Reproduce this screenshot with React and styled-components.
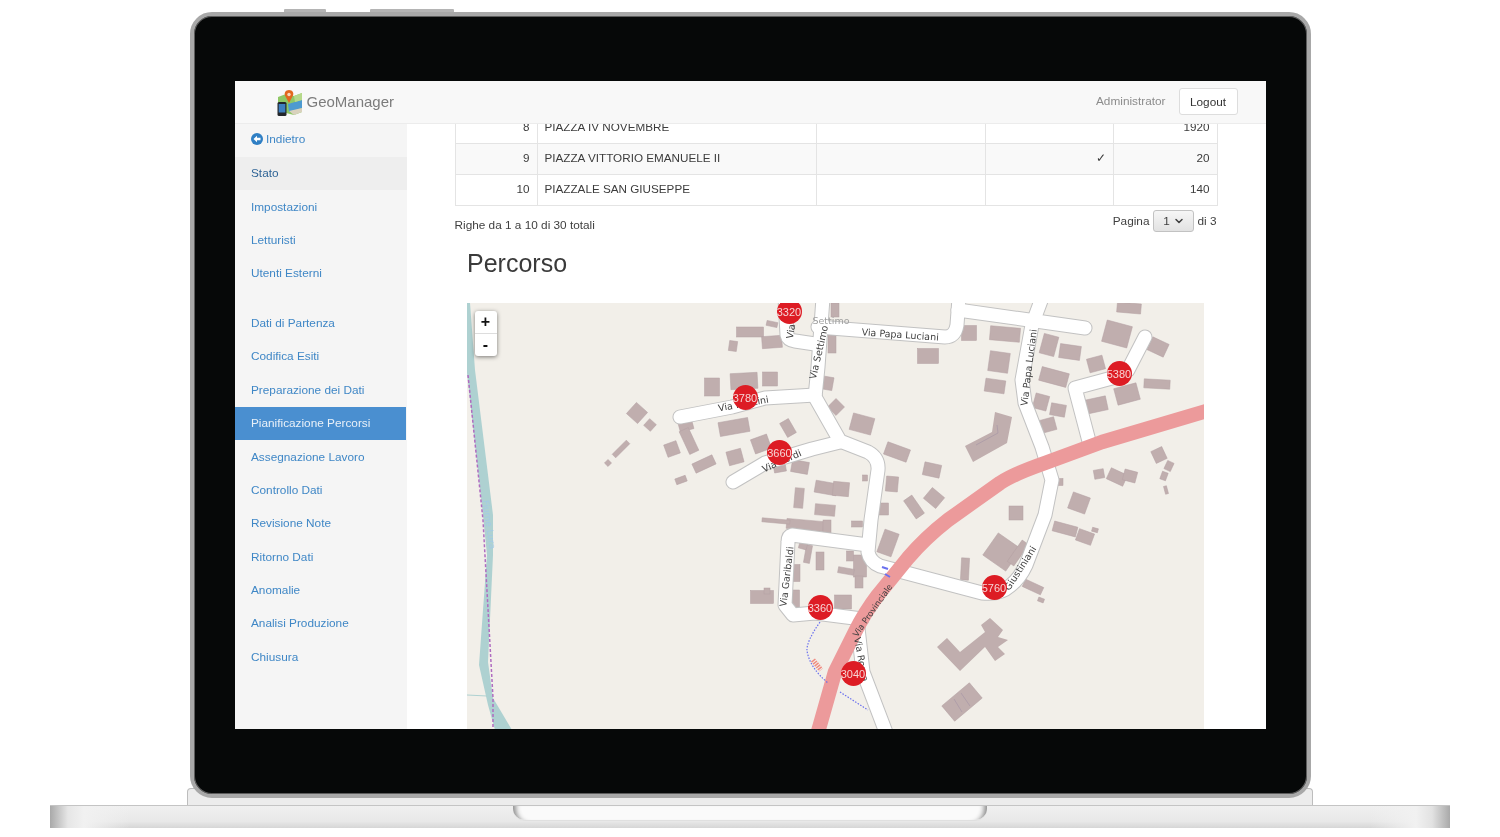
import React from 'react';
import styled, { createGlobalStyle } from 'styled-components';
import { ChevronDown } from 'lucide-react';

const GlobalStyle = createGlobalStyle`
html, body {
  margin: 0;
  padding: 0;
  background: #fff;
}
body {
  font-family: "Liberation Sans", Arial, sans-serif;
  font-size: 11.8px;
  color: #3f3f3f;
}
`;

const Page = styled.div`
width: 1500px;
height: 837px;
padding-top: 9px;
box-sizing: border-box;
overflow: hidden;
`;

const Laptop = styled.div`
display: flex;
flex-direction: column;
align-items: center;
`;

const LidButtons = styled.div`
display: flex;
gap: 44px;
width: 1121px;
height: 3px;
padding-left: 94px;
box-sizing: border-box;
`;

const LidButton = styled.div`
width: ${p => p.$w}px;
background: #b4b4b4;
border-radius: 1px 1px 0 0;
`;

const Lid = styled.div`
position: relative;
z-index: 1;
width: 1121px;
height: 786px;
box-sizing: border-box;
padding: 65px 41px;
background: #060808;
border: 4px solid #a8a8a8;
border-radius: 22px;
box-shadow: inset 0 0 0 1px #5c5c5c;
`;

const Hinge = styled.div`
width: 1126px;
height: 17px;
margin-top: -10px;
box-sizing: border-box;
background: #ececec;
border: 1px solid #bdbdbd;
border-bottom: none;
border-radius: 4px 4px 0 0;
`;

const Base = styled.div`
position: relative;
width: 1400px;
height: 23px;
box-sizing: border-box;
border-top: 1px solid #c4c4c4;
background:
  linear-gradient(90deg, #a9a9a9 0, #e6e6e6 18px, #f1f1f1 34px, rgba(240,240,240,0) 80px, rgba(240,240,240,0) 1320px, #f1f1f1 1366px, #e2e2e2 1382px, #a9a9a9 1400px),
  linear-gradient(180deg, #f0f0f0 0, #e8e8e8 70%, #d6d6d6 100%);
`;

const Notch = styled.div`
position: absolute;
top: 0;
left: 463px;
width: 474px;
height: 15px;
box-sizing: border-box;
background: #fafafa;
border-bottom: 1px solid #e0e0e0;
border-radius: 0 0 12px 12px;
box-shadow: inset 8px 0 5px -5px #8e8e8e, inset -8px 0 5px -5px #8e8e8e;
`;

const Screen = styled.div`
width: 1031px;
height: 648px;
display: flex;
flex-direction: column;
background: #fff;
overflow: hidden;
filter: blur(0.35px);
`;

const Navbar = styled.header`
display: flex;
align-items: center;
flex: 0 0 43px;
box-sizing: border-box;
padding: 0 28px 2px 42px;
background: #f8f8f8;
border-bottom: 1px solid #ececec;
`;

const Brand = styled.div`
display: flex;
align-items: center;
gap: 4px;
flex: 1;
font-size: 15px;
color: #7c7c7c;
svg {
  margin-top: 3px;
}
`;

const UserName = styled.span`
margin-right: 13px;
color: #8c8c8c;
`;

const LogoutButton = styled.button`
width: 59px;
height: 27px;
margin-top: 1px;
padding: 0;
background: #fff;
border: 1px solid #ddd;
border-radius: 3px;
font: inherit;
color: #333;
`;

const Body = styled.div`
display: flex;
flex: 1;
min-height: 0;
`;

const Sidebar = styled.nav`
flex: 0 0 172px;
display: flex;
flex-direction: column;
background: #f5f5f5;
`;

const NavItem = styled.a`
display: flex;
align-items: center;
gap: 3px;
flex: 0 0 ${p => (p.$back ? 33 : 33.4)}px;
box-sizing: border-box;
margin-top: ${p => (p.$groupStart ? 16.2 : 0)}px;
margin-right: ${p => (p.$active ? 1 : 0)}px;
padding: 0 0 ${p => (p.$back ? 3 : 1)}px 16.5px;
background: ${p => (p.$active ? '#4a8fd0' : p.$current ? '#eeeeee' : 'transparent')};
color: ${p => (p.$active ? '#e8f0f8' : p.$current ? '#2f6496' : '#3f87c6')};
`;

const Content = styled.main`
flex: 1;
min-width: 0;
padding: 0 49px 0 48px;
overflow: hidden;
`;

const Table = styled.table`
width: 762px;
margin-top: -12px;
table-layout: fixed;
border-collapse: collapse;
font-size: 11.7px;
`;

const Row = styled.tr`
height: 31px;
background: ${p => (p.$striped ? '#f9f9f9' : '#fff')};
`;

const Cell = styled.td`
padding: 0 7px 3px;
border: 1px solid #e4e4e4;
text-align: ${p => (p.$right ? 'right' : 'left')};
color: #3c3c3c;
`;

const Pager = styled.div`
display: flex;
justify-content: space-between;
align-items: flex-start;
height: 26px;
`;

const RowCount = styled.span`
padding-top: 11.5px;
line-height: 14px;
`;

const PageControl = styled.div`
display: flex;
align-items: center;
gap: 4px;
padding-top: 4px;
height: 22px;
line-height: 20px;
`;

const PageSelect = styled.div`
display: flex;
align-items: center;
justify-content: center;
gap: 3px;
width: 41px;
height: 22px;
margin-right: -1px;
box-sizing: border-box;
background: linear-gradient(180deg, #f6f6f6, #e2e2e2);
border: 1px solid #c2c2c2;
border-radius: 3px;
`;

const Title = styled.h2`
margin: 18px 0 27px 12.5px;
font-size: 25px;
font-weight: 400;
line-height: 26px;
color: #3a3a3a;
`;

const MapFrame = styled.div`
position: relative;
width: 737px;
height: 426px;
margin-left: 12px;
overflow: hidden;
background: #f2efe9;
`;

const MapDrawing = styled.svg`
display: block;
width: 737px;
height: 426px;
font-family: "DejaVu Sans", sans-serif;
`;

const ZoomControl = styled.div`
position: absolute;
top: 8px;
left: 8px;
width: 22px;
background: #fff;
border-radius: 3px;
box-shadow: 0 1px 4px rgba(0, 0, 0, 0.5);
`;

const ZoomButton = styled.div`
height: 22px;
display: flex;
align-items: center;
justify-content: center;
font-size: 16px;
font-weight: 700;
color: #111;
& + & {
  border-top: 1px solid #ddd;
}
`;

const Pin = styled.div.attrs(p => ({
  style: { left: p.$x - 467 - 12, top: p.$y - 303 - 12 },
}))`
position: absolute;
width: 25px;
height: 25px;
display: flex;
align-items: center;
justify-content: center;
border-radius: 50%;
background: #dd1c24;
color: #f6d5d5;
font-size: 11px;
`;

const sideItems = [
  { label: 'Stato', current: true },
  { label: 'Impostazioni' },
  { label: 'Letturisti' },
  { label: 'Utenti Esterni' },
  { label: 'Dati di Partenza', groupStart: true },
  { label: 'Codifica Esiti' },
  { label: 'Preparazione dei Dati' },
  { label: 'Pianificazione Percorsi', active: true },
  { label: 'Assegnazione Lavoro' },
  { label: 'Controllo Dati' },
  { label: 'Revisione Note' },
  { label: 'Ritorno Dati' },
  { label: 'Anomalie' },
  { label: 'Analisi Produzione' },
  { label: 'Chiusura' },
];

const rows = [
  { n: 8, name: 'PIAZZA IV NOVEMBRE', check: '', total: 1920 },
  { n: 9, name: 'PIAZZA VITTORIO EMANUELE II', check: '✓', total: 20, striped: true },
  { n: 10, name: 'PIAZZALE SAN GIUSEPPE', check: '', total: 140 },
];

const pins = [
  [789, 311, 3320], [745, 397, 3780], [779.5, 452, 3660], [1119, 373, 5380],
  [994, 587, 5760], [820, 607, 3360], [853, 673, 3040],
];

const roads = [
  'M823 298 L818 367 L815 397 L840 441 L868 452 Q879 458 878 470 L871 520 L868 552 Q870 562 880 566 L982 593 Q1000 595 1010 586 Q1020 578 1026 565 L1045 515 L1052 480 L1042 447 L1025 403 L1022 380 L1032 325 L1042 298',
  'M785 298 L787 335 Q788 340 795 341 L815 344',
  'M818 327 L945 337 Q955 337 957 325 L959 298',
  'M958 310 L1085 328',
  'M680 417 L732 407 L765 398 L815 395',
  'M733 482 L765 463 L812 449 L840 442',
  'M1145 337 L1128 370 L1112 378 L1075 388 L1090 445',
  'M868 545 L792 535 Q788 536 788 542 L785 605 L793 615 L815 613 L862 619',
  'M858 628 L863 672 L887 735',
];

// x, y (centre), w, h, angle
const buildings = [
  [750, 332, 27, 10, 0], [772, 324, 11, 5, 12], [733, 346, 8, 10, 8], [772, 342, 20, 12, -4],
  [712, 387, 15, 18, 0], [744, 381, 27, 16, -3], [770, 379, 15, 14, 0],
  [637, 413, 15, 15, 42], [650, 425, 9, 9, 42], [621, 449, 20, 5, -45], [608, 463, 5, 5, 45],
  [686, 426, 14, 9, -15], [689, 441, 10, 25, -25], [672, 449, 13, 13, -20],
  [734, 427, 30, 14, -10], [788, 428, 10, 16, -30], [761, 444, 17, 15, -20], [735, 457, 15, 14, -15],
  [704, 464, 22, 10, -25], [681, 480, 11, 6, -20], [780, 469, 12, 6, -10], [800, 467, 17, 12, 10],
  [799, 498, 9, 20, 5], [826, 488, 22, 12, 10], [825, 510, 20, 11, 5], [826, 383, 14, 13, 10],
  [832, 344, 8, 18, 0], [836, 407, 12, 12, 45], [835, 310, 8, 14, 0], [969, 333, 15, 15, 0],
  [1005, 334, 30, 14, 5], [928, 356, 21, 15, 0], [999, 362, 20, 20, 8], [995, 386, 20, 13, 8],
  [1117, 334, 26, 22, 15], [1129, 308, 24, 10, 5], [1049, 345, 15, 20, 15], [1070, 352, 21, 14, 8],
  [1096, 364, 16, 14, -15], [1158, 347, 18, 14, 25], [1054, 377, 28, 14, 15], [1096, 405, 22, 14, -12],
  [1127, 394, 23, 17, -15], [1157, 384, 26, 9, 3], [1041, 402, 14, 15, 15], [1058, 410, 15, 12, 10],
  [1048, 425, 15, 13, -15], [862, 424, 22, 17, 15], [897, 452, 24, 13, 20], [932, 470, 17, 13, 12],
  [892, 484, 12, 15, 5], [865, 478, 5, 6, 0], [841, 489, 16, 14, 5], [883, 509, 11, 12, 0],
  [934, 498, 16, 14, 40], [914, 507, 10, 22, -35], [1016, 513, 14, 14, 0], [1079, 503, 18, 17, 20],
  [1159, 455, 12, 13, -25], [1169, 466, 7, 9, 25], [1164, 476, 6, 8, 20], [1166, 490, 3, 8, -15],
  [1099, 474, 10, 9, -10], [1117, 477, 18, 12, 25], [1130, 476, 13, 11, 15], [1060, 482, 6, 7, 0],
  [1065, 529, 24, 10, 15], [1085, 537, 16, 12, 20], [1095, 530, 6, 4, 15], [1002, 552, 28, 27, 35],
  [1018, 553, 8, 26, 35], [965, 569, 8, 22, 3], [1033, 587, 20, 8, 25], [1041, 600, 6, 4, 20],
  [888, 543, 15, 24, 20], [860, 566, 13, 22, 0], [846, 571, 16, 6, 10], [859, 582, 8, 12, 0],
  [850, 556, 7, 10, 0], [843, 602, 17, 14, 0], [857, 524, 11, 6, 0], [805, 525, 37, 10, 5],
  [776, 521, 28, 4, 5], [827, 527, 8, 14, 0], [762, 597, 23, 13, 0], [767, 591, 6, 6, 0],
  [795, 600, 9, 20, 0], [796, 573, 8, 17, 0], [808, 554, 6, 18, 10], [820, 561, 8, 18, 0],
  [803, 546, 8, 6, 15], [962, 702, 36, 20, -40],
];

const mapLabels = [
  { text: 'Via Papa Luciani', x: 900, y: 338, angle: 4, size: 9.5 },
  { text: 'Via Papa Luciani', x: 1032, y: 368, angle: -83, size: 9.5 },
  { text: 'Via Settimo', x: 822, y: 353, angle: -77, size: 9.5 },
  { text: 'Via', x: 794, y: 332, angle: -80, size: 9.5 },
  { text: 'Settimo', x: 831, y: 324, angle: 0, size: 9.5, color: '#a0a0a0' },
  { text: 'Via Puccini', x: 744, y: 407, angle: -10, size: 9.5 },
  { text: 'Via Verdi', x: 783, y: 464, angle: -24, size: 9.5 },
  { text: 'Via Garibaldi', x: 790, y: 577, angle: -83, size: 9.5 },
  { text: 'Via Provinciale', x: 875, y: 612, angle: -55, size: 8.5 },
  { text: 'Via Roma', x: 858, y: 660, angle: 80, size: 9.5 },
  { text: 'Giustiniani', x: 1023, y: 570, angle: -57, size: 9.5 },
  { text: 'Fiume Lura', x: 486, y: 525, angle: 82, size: 9, color: '#a4cae4' },
];

const AppLogo = () => (
  <svg width="26" height="26" viewBox="0 0 26 26">
    <path d="M1 7 L9 4 L17 6 L25 3 V22 L17 25 L9 23 L1 25 Z" fill="#8fc866" />
    <path d="M11 14 L25 10 V18 L12 22 Z" fill="#4d9ad0" />
    <path d="M17 6 L25 3 V10 L18 12 Z" fill="#b6d98a" />
    <path d="M12 21 L25 18 V22 L17 25 Z" fill="#d9d2bd" />
    <path d="M12 0 C8.5 0 7 3 8 5.5 L12 13 L16 5.5 C17 3 15.5 0 12 0 Z" fill="#e2681e" />
    <circle cx="12" cy="4.5" r="1.7" fill="#f8d8b8" />
    <rect x="0.5" y="12" width="9" height="14" rx="1.5" fill="#23262b" />
    <rect x="1.7" y="14" width="6.6" height="8.5" fill="#3d7fc0" />
  </svg>
);

const BackIcon = () => (
  <svg width="12" height="12" viewBox="0 0 12 12">
    <circle cx="6" cy="6" r="6" fill="#2f7fc4" />
    <path d="M2.5 6 L6 2.8 V4.8 H9.5 V7.2 H6 V9.2 Z" fill="#fff" />
  </svg>
);

const RouteMap = () => (
  <MapFrame>
    <MapDrawing viewBox="467 303 737 426">
      <path d="M467 303 L470 303 L475 370 L493 515 L493 555 L488 662 L493 698 L512 730 L495 730 L488 705 L479 665 L487 555 L483 515 L467 373 Z" fill="#aed1d1" />
      <path d="M467 695 L487 696" stroke="#aed1d1" strokeWidth="1" />
      {buildings.map(([x, y, w, h, a], i) => (
        <rect key={i} x={x - w / 2} y={y - h / 2} width={w} height={h} fill="#c0aeae" stroke="#b3a0a3" strokeWidth="0.5" transform={`rotate(${a} ${x} ${y})`} />
      ))}
      <path d="M995 412 L1012 417 L1007 443 L973 462 L965 446 L992 432 Z" fill="#c0aeae" />
      <path d="M947 638 L960 652 L985 632 L981 625 L990 618 L1003 630 L998 637 L1008 640 L998 647 L1005 654 L995 661 L985 647 L960 671 L937 647 Z" fill="#c0aeae" />
      <path d="M976 445 L998 433 L997 425" fill="none" stroke="#a896a6" strokeWidth="0.7" />
      <path d="M954 699 L962 712 M961 693 L970 706" fill="none" stroke="#a896a6" strokeWidth="0.7" />
      {roads.map((d, i) => (
        <path key={i} d={d} fill="none" stroke="#c2c2c2" strokeWidth="15" strokeLinecap="round" strokeLinejoin="round" />
      ))}
      {roads.map((d, i) => (
        <path key={i} d={d} fill="none" stroke="#fff" strokeWidth="13" strokeLinecap="round" strokeLinejoin="round" />
      ))}
      <path d="M1210 410 L1102 442 L1045 463 C1025 470 1012 475 1000 483 L948 520 Q925 538 908 558 L878 595 Q865 612 855 632 L835 672 L818 732" fill="none" stroke="#ec9a9b" strokeWidth="14.5" strokeLinejoin="round" />
      <path d="M468 375 L483 520 L493 698 L493 730" fill="none" stroke="#b06cc0" strokeWidth="1.5" strokeDasharray="3 2" />
      <path d="M820 622 Q806 642 807 651 Q810 668 828 683 M840 692 L868 710" fill="none" stroke="#6a70ee" strokeWidth="1.2" strokeDasharray="1.5 1.5" />
      <path d="M882 567 L888 569 M885 574 L890 577" stroke="#6a70ee" strokeWidth="2" />
      <path d="M813 660 L821 670" stroke="#f08a80" strokeWidth="5" strokeDasharray="1.5 1" />
      {mapLabels.map(({ text, x, y, angle, size, color }, i) => (
        <text key={i} x={x} y={y} fontSize={size} fill={color || '#3f3f3f'} textAnchor="middle" transform={`rotate(${angle} ${x} ${y})`}>{text}</text>
      ))}
    </MapDrawing>
    <ZoomControl>
      <ZoomButton>+</ZoomButton>
      <ZoomButton>-</ZoomButton>
    </ZoomControl>
    {pins.map(([x, y, label]) => (
      <Pin key={label} $x={x} $y={y}>{label}</Pin>
    ))}
  </MapFrame>
);

const App = () => (
  <Page>
    <GlobalStyle />
    <Laptop>
      <LidButtons>
        <LidButton $w={42} />
        <LidButton $w={84} />
      </LidButtons>
      <Lid>
        <Screen>
          <Navbar>
            <Brand><AppLogo />GeoManager</Brand>
            <UserName>Administrator</UserName>
            <LogoutButton>Logout</LogoutButton>
          </Navbar>
          <Body>
            <Sidebar>
              <NavItem $back><BackIcon />Indietro</NavItem>
              {sideItems.map(item => (
                <NavItem key={item.label} $current={item.current} $active={item.active} $groupStart={item.groupStart}>
                  {item.label}
                </NavItem>
              ))}
            </Sidebar>
            <Content>
              <Table>
                <colgroup>
                  <col width="82" />
                  <col width="279" />
                  <col width="169" />
                  <col width="128" />
                  <col width="104" />
                </colgroup>
                <tbody>
                  {rows.map(row => (
                    <Row key={row.n} $striped={row.striped}>
                      <Cell $right>{row.n}</Cell>
                      <Cell>{row.name}</Cell>
                      <Cell />
                      <Cell $right>{row.check}</Cell>
                      <Cell $right>{row.total}</Cell>
                    </Row>
                  ))}
                </tbody>
              </Table>
              <Pager>
                <RowCount>Righe da 1 a 10 di 30 totali</RowCount>
                <PageControl>
                  Pagina
                  <PageSelect>1 <ChevronDown size={12} strokeWidth={3} /></PageSelect>
                  di 3
                </PageControl>
              </Pager>
              <Title>Percorso</Title>
              <RouteMap />
            </Content>
          </Body>
        </Screen>
      </Lid>
      <Hinge />
      <Base><Notch /></Base>
    </Laptop>
  </Page>
);

export default App;
